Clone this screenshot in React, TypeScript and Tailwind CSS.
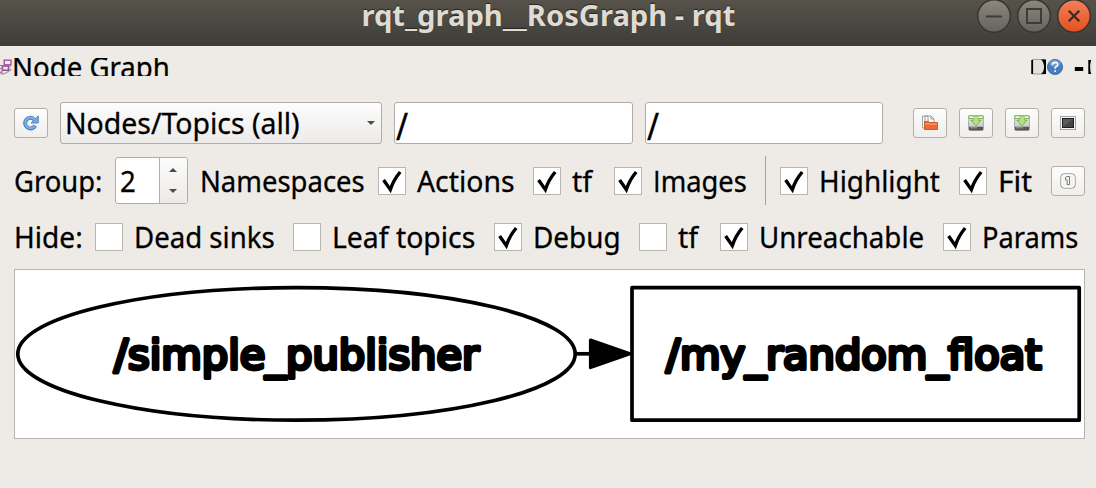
import type { ReactNode } from "react";

const uiFont = "font-['Noto_Sans',sans-serif] text-[29px]";

/** Text run whose glyphs are condensed horizontally by the scale class given. */
function Label({ children, className = "" }: { children: ReactNode; className?: string }) {
  return (
    <span
      className={`inline-block origin-left whitespace-nowrap leading-[34px] [-webkit-text-stroke:0.3px_#000] ${className}`}
    >
      {children}
    </span>
  );
}

function Check({
  label,
  checked = false,
  cell,
  scale,
}: {
  label: ReactNode;
  checked?: boolean;
  cell: string;
  scale: string;
}) {
  return (
    <div role="checkbox" aria-checked={checked} className={`flex shrink-0 items-center gap-[11px] ${cell}`}>
      <span className="flex h-7 w-7 shrink-0 border border-[#b9b6b0] bg-white">
        {checked && (
          <svg viewBox="0 0 26 26" className="h-[26px] w-[26px]">
            <path d="M4.6 12 L11.3 21.6 Q14.5 12 21.2 4" fill="none" stroke="#000" strokeWidth="3.4" />
          </svg>
        )}
      </span>
      <Label className={scale}>{label}</Label>
    </div>
  );
}

function ToolButton({ children, title, className = "" }: { children: ReactNode; title: string; className?: string }) {
  return (
    <button
      aria-label={title}
      className={`flex h-[30px] w-[34px] shrink-0 items-center justify-center rounded-[3px] border border-[#b3b0aa] bg-linear-to-b from-[#fdfdfd] to-[#efeeec] ${className}`}
    >
      <svg viewBox="0 0 16 16" className="h-4 w-4">
        {children}
      </svg>
    </button>
  );
}

function SaveIcon() {
  return (
    <>
      <defs>
        <linearGradient id="disk" x1="0" y1="0" x2="0" y2="1">
          <stop offset="0" stopColor="#f4f4f2" />
          <stop offset="1" stopColor="#b9bab6" />
        </linearGradient>
      </defs>
      <path d="M1 1 H15 L15.6 10.5 V13.5 Q15.6 15.5 14 15.5 H2 Q.4 15.5 .4 13.5 V10.5 Z" fill="url(#disk)" stroke="#8e908c" strokeWidth=".7" />
      <path d="M1 11.8 H15 V14 Q15 15.3 13.8 15.3 H2.2 Q1 15.3 1 14 Z" fill="#555753" />
      <path d="M2 12.8 H9" stroke="#a9aaa6" strokeWidth=".9" />
      <path d="M.8 .8 H15.2 V3.6 H10.7 V5.3 H13.2 L8 10.8 L2.8 5.3 H5.3 V3.6 H.8 Z" fill="#b4df88" stroke="#6fab49" strokeWidth=".9" />
      <path d="M1.5 2.2 H5 M11 2.2 H14.5" stroke="#f7fcf0" strokeWidth="1.6" />
    </>
  );
}

function TitleBar() {
  return (
    <header className="flex h-[46px] shrink-0 items-start bg-linear-to-b from-[#57534b] via-[#4a4842] to-[#3d3c37] pl-[121px]">
      <h1 className="flex h-[30px] flex-1 justify-center font-['Noto_Sans',sans-serif] text-[28px] font-bold leading-[30px] text-[#dfdbd2] [text-shadow:0_-1px_1px_#26251f]">
        <span className="inline-block scale-x-[1.042] whitespace-nowrap">rqt_graph__RosGraph - rqt</span>
      </h1>
      <div className="flex h-[34px] w-[121px] shrink-0">
        <svg viewBox="975 0 121 34" className="h-[34px] w-[121px]">
          <defs>
            <linearGradient id="grey" x1="0" y1="0" x2="0" y2="1">
              <stop offset="0" stopColor="#8b877f" />
              <stop offset="1" stopColor="#66635c" />
            </linearGradient>
            <linearGradient id="red" x1="0" y1="0" x2="0" y2="1">
              <stop offset="0" stopColor="#f4805b" />
              <stop offset="1" stopColor="#e4501f" />
            </linearGradient>
          </defs>
          <circle cx="994" cy="16" r="16.3" fill="url(#grey)" stroke="#37352f" strokeWidth="1.5" />
          <circle cx="1034" cy="16" r="16.3" fill="url(#grey)" stroke="#37352f" strokeWidth="1.5" />
          <circle cx="1074" cy="16" r="16.3" fill="url(#red)" stroke="#37352f" strokeWidth="1.5" />
          <path d="M986 16.5 H1002" stroke="#3c3b37" strokeWidth="2" />
          <rect x="1027" y="9" width="14" height="14" fill="none" stroke="#3c3b37" strokeWidth="2" />
          <path d="M1068.7 10.7 L1079.3 21.3 M1079.3 10.7 L1068.7 21.3" stroke="#3c2a22" strokeWidth="2.2" />
        </svg>
      </div>
    </header>
  );
}

function DockTitle() {
  return (
    <div className="mt-3 flex h-[18px] shrink-0 overflow-hidden">
      <svg viewBox="0 0 12 18" className="h-[18px] w-3 shrink-0">
        <g fill="#f6eaf6">
          <path d="M0 15.2 Q4 17 7.5 14 L11.3 11" fill="none" stroke="#aaa7a7" strokeWidth="1.6" />
          <rect x="4.2" y="2.2" width="6.8" height="4.6" stroke="#a45fa3" strokeWidth="1.5" />
          <rect x="2.5" y="8" width="6" height="4.2" stroke="#8b4f8b" strokeWidth="1.5" />
          <rect x="-2" y="10.5" width="4" height="3.8" stroke="#b07cb0" strokeWidth="1.4" />
          <path d="M0 7.5 H2.5 M9.5 9 L11 7" fill="none" stroke="#9a6b99" />
        </g>
      </svg>
      <div className="flex h-[18px] flex-1 items-center">
        <Label className="scale-x-[0.952]">Node Graph</Label>
      </div>
      <svg viewBox="1031 58 65 18" className="h-[18px] w-[65px] shrink-0">
        <rect x="1032" y="59.5" width="13" height="14.5" rx="1" fill="#e4e1dc" stroke="#6f6d69" strokeWidth=".6" />
        <path d="M1032.2 60 V74" stroke="#000" strokeWidth="1.8" />
        <path d="M1041 59.5 H1046 V74 H1041 Q1044 72 1044 67 Q1044 62 1041 59.5Z" fill="#000" />
        <circle cx="1055" cy="67" r="7.6" fill="#437fb9" stroke="#2d639b" strokeWidth=".8" />
        <ellipse cx="1055" cy="63.5" rx="5.5" ry="3.5" fill="#6d9fce" />
        <path d="M1052.3 64.8 Q1052.6 62.4 1055.2 62.4 Q1057.8 62.5 1057.6 64.8 Q1057.4 66.2 1055.2 67.4 V68.8 M1055.2 70.2 V71.9" fill="none" stroke="#fff" strokeWidth="1.6" />
        <rect x="1074.8" y="67" width="8.4" height="4" fill="#000" />
        <path d="M1091.2 60 H1088.3 V74 H1091.2 Q1089 67 1091.2 60Z" fill="#000" />
        <path d="M1091.2 62 Q1089.6 67 1091.2 72.5Z" fill="#9fc0dc" />
      </svg>
    </div>
  );
}

function Arrow({ up = false }: { up?: boolean }) {
  return (
    <svg viewBox="0 0 8 4" className="h-1 w-2">
      <path d={up ? "M0 4 L4 0 L8 4Z" : "M0 0 L4 4 L8 0Z"} fill="#4c4c4c" />
    </svg>
  );
}

function FilterInput({ className }: { className: string }) {
  return (
    <div className={`flex h-[42px] shrink-0 items-center rounded-[3px] border border-[#b0ada7] bg-white pl-px pt-[3px] ${className}`}>
      <Label className="scale-x-[1.12] scale-y-[1.35]">/</Label>
    </div>
  );
}

function Graph() {
  return (
    <div className="mx-[14px] mr-[11px] mt-[18px] h-[170px] shrink-0 border border-[#b8b5b0] bg-white">
      <svg viewBox="15 270 1069 168" className="h-[168px] w-[1069px]">
        <g fill="none" stroke="#000" strokeWidth="3.7" strokeLinejoin="round">
          <ellipse cx="296.5" cy="353.9" rx="278.7" ry="66.3" />
          <rect x="632" y="287.6" width="447.2" height="132.6" />
          <path d="M575 353.8 H590" />
          <path d="M590.5 340 L630 353.8 L590.5 367.6Z" fill="#000" strokeWidth="3.2" />
        </g>
        <g
          className="font-['DejaVu_Sans',sans-serif] text-[41.6px]"
          fill="#000"
          stroke="#000"
          strokeWidth="3.9"
          strokeLinejoin="round"
        >
          <text x="114" y="369">/simple_publisher</text>
          <text x="666" y="369">/my_random_float</text>
        </g>
      </svg>
    </div>
  );
}

export default function App() {
  return (
    <div className={`flex h-[488px] w-[1096px] flex-col overflow-hidden bg-[#eeebe7] text-black ${uiFont}`}>
      <TitleBar />
      <DockTitle />

      <div className="mt-[26px] flex h-[42px] shrink-0 items-center pl-[14px]">
        <ToolButton title="Refresh">
          <path d="M12.2 10.5 A5.3 5.3 0 1 1 11 4.2" fill="none" stroke="#4a86c2" strokeWidth="4" />
          <path d="M15.3 .8 V8 H8 Z" fill="#76a9db" stroke="#4a86c2" strokeWidth=".9" />
          <path d="M12.2 10.5 A5.3 5.3 0 1 1 11.8 4.6" fill="none" stroke="#83b1de" strokeWidth="2" />
        </ToolButton>
        <div className="ml-3 flex h-[42px] w-[322px] shrink-0 items-center justify-between rounded-[3px] border border-[#b0ada7] bg-linear-to-b from-[#fdfdfd] to-[#edebe9] pl-1 pr-[6px]">
          <Label className="scale-x-[0.98]">Nodes/Topics (all)</Label>
          <Arrow />
        </div>
        <FilterInput className="ml-3 w-[239px]" />
        <FilterInput className="ml-3 w-[238px]" />
        <ToolButton title="Open" className="ml-[30px]">
          <path d="M.5 1 H6 V13 H.5Z M3 1 H9 L12 4 V9 H3Z" fill="#fafafa" stroke="#8d8d8a" strokeWidth=".8" />
          <path d="M9 1 V4 H12" fill="none" stroke="#8d8d8a" strokeWidth=".8" />
          <path d="M2.5 6.5 H6.5 L7.5 7.5 H15.5 V14.5 H2.5Z" fill="#ed6a33" stroke="#c8441b" strokeWidth=".8" />
          <path d="M3 9 H15" stroke="#f8a177" strokeWidth="1.2" />
        </ToolButton>
        <ToolButton title="Save as DOT" className="ml-3">
          <SaveIcon />
        </ToolButton>
        <ToolButton title="Save as SVG" className="ml-3">
          <SaveIcon />
        </ToolButton>
        <ToolButton title="Save as image" className="ml-3">
          <rect x=".5" y="1.5" width="15" height="13" fill="#f5f5f4" stroke="#a5a5a2" />
          <rect x="2.5" y="3.5" width="11" height="9" fill="#454545" stroke="#1e1e1e" />
          <path d="M3 4 H13 L3 12Z" fill="#5b5b5b" />
        </ToolButton>
      </div>

      <div className="mt-[12px] flex h-[49px] shrink-0 items-center pl-[14px]">
        <div className="flex w-[101px] shrink-0">
          <Label className="scale-x-[0.945]">Group:</Label>
        </div>
        <div className="flex h-[47px] w-[73px] shrink-0 overflow-hidden rounded-[3px] border border-[#b0ada7] bg-white">
          <div className="flex w-[43px] items-center pl-1">
            <Label className="scale-x-[0.95]">2</Label>
          </div>
          <div className="flex flex-1 flex-col items-center justify-center gap-[17px] border-l border-[#b0ada7] bg-linear-to-b from-[#fbfbfb] to-[#edebe9] pr-px">
            <Arrow up />
            <Arrow />
          </div>
        </div>
        <div className="flex w-[190px] shrink-0 pl-3">
          <Label className="scale-x-[0.947]">Namespaces</Label>
        </div>
        <Check label="Actions" checked cell="w-[155px]" scale="scale-x-[0.978]" />
        <Check label="tf" checked cell="w-[81px]" scale="scale-x-[0.979]" />
        <Check
          label={
            <>
              <span className="font-['Open_Sans',sans-serif]">I</span>mages
            </>
          }
          checked
          cell="w-[151px]"
          scale="scale-x-[0.942]"
        />
        <div className="h-[49px] w-px shrink-0 bg-[#a5a29c]" />
        <Check label="Highlight" checked cell="ml-[14px] w-[179px]" scale="scale-x-[0.96]" />
        <Check label="Fit" checked cell="w-[92px]" scale="scale-x-[1.032]" />
        <ToolButton title="Zoom to 1:1">
          <rect x=".8" y=".8" width="14.4" height="14.4" rx="3.5" fill="#f3f3f2" stroke="#979794" />
          <rect x="2" y="2" width="12" height="12" rx="2.5" fill="none" stroke="#fff" />
          <path d="M5.5 4.5 L7 3.5 H9.5 V11.5 H7.2 V6.8 H5.5Z" fill="#fff" stroke="#666" strokeWidth=".9" />
        </ToolButton>
      </div>

      <div className="mt-[18px] flex h-7 shrink-0 items-center pl-[14px]">
        <div className="flex w-[81px] shrink-0">
          <Label className="scale-x-[0.968]">Hide:</Label>
        </div>
        <Check label="Dead sinks" cell="w-[198px]" scale="scale-x-[0.952]" />
        <Check label="Leaf topics" cell="w-[201px]" scale="scale-x-[0.978]" />
        <Check label="Debug" checked cell="w-[145px]" scale="scale-x-[0.962]" />
        <Check label="tf" cell="w-[81px]" scale="scale-x-[0.979]" />
        <Check label="Unreachable" checked cell="w-[223px]" scale="scale-x-[0.955]" />
        <Check label="Params" checked cell="w-[142px]" scale="scale-x-[0.939]" />
      </div>

      <Graph />
    </div>
  );
}
